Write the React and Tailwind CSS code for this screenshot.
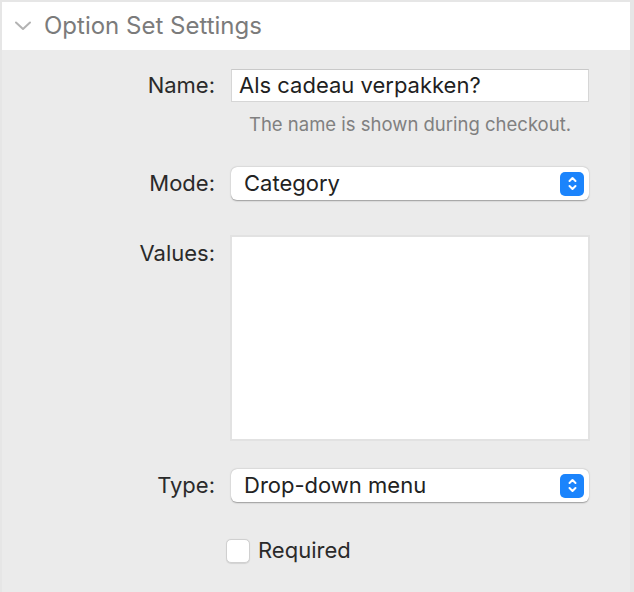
const font = { fontFamily: "Inter, 'Noto Sans', sans-serif" };

function Stepper() {
  return (
    <div className="w-[24px] h-[24px] rounded-[5px] bg-[#1b84fc] flex items-center justify-center">
      <svg width="11" height="17" viewBox="0 0 11 17" fill="none" stroke="white" strokeWidth="2" strokeLinecap="round" strokeLinejoin="round">
        <path d="M2.5 6 L5.5 3 L8.5 6" />
        <path d="M2.5 11 L5.5 14 L8.5 11" />
      </svg>
    </div>
  );
}

function Select({ value }) {
  return (
    <div className="w-[358px] h-[33px] bg-white rounded-[6px] shadow-[0_0.5px_1.5px_rgba(0,0,0,0.35)] flex items-center justify-between pl-[13px] pr-[5px]">
      <span className="text-[22px] leading-[33px] text-[#222]">{value}</span>
      <Stepper />
    </div>
  );
}

function Label({ children, className = "" }) {
  return <div className={`w-[213px] text-right text-[22px] leading-[33px] text-[#2a2a2a] ${className}`}>{children}</div>;
}

export default function App() {
  return (
    <div className="w-[634px] h-[592px] bg-[#e6e6e6] pt-[2px] pl-[2px] pr-[4px]" style={font}>
      <div className="h-full bg-[#ebebeb] flex flex-col">
        <div className="h-[48px] bg-white flex items-center">
          <svg className="ml-[13px]" width="16" height="10" viewBox="0 0 16 10" fill="none" stroke="#b3b3b3" strokeWidth="2" strokeLinecap="round" strokeLinejoin="round">
            <path d="M1 1.5 L8 8 L15 1.5" />
          </svg>
          <span className="ml-[13px] text-[24px] leading-[32px] text-[#7b7b7b]">Option Set Settings</span>
        </div>

        <div className="flex flex-col">
          <div className="flex items-center mt-[19px]">
            <Label>Name:</Label>
            <div className="ml-[16px] w-[358px] h-[33px] bg-white border border-[#d6d6d6] border-t-[#c9c9c9] flex items-center pl-[7px]">
              <span className="text-[22px] leading-[31px] text-[#1f1f1f]">Als cadeau verpakken?</span>
            </div>
          </div>
          <div className="ml-[229px] w-[358px] text-center text-[18.5px] leading-[22px] text-[#808080] mt-[11px]">
            The name is shown during checkout.
          </div>

          <div className="flex items-center mt-[32px]">
            <Label>Mode:</Label>
            <div className="ml-[16px]"><Select value="Category" /></div>
          </div>

          <div className="flex mt-[35px]">
            <Label className="pt-[2px]">Values:</Label>
            <div className="ml-[15px] w-[360px] h-[206px] bg-white border-2 border-[#e2e2e2]" />
          </div>

          <div className="flex items-center mt-[28px]">
            <Label>Type:</Label>
            <div className="ml-[16px]"><Select value="Drop-down menu" /></div>
          </div>

          <div className="flex items-center mt-[32px] ml-[224px]">
            <div className="w-[24px] h-[24px] bg-white rounded-[5px] border border-[#d0d0d0] shadow-[0_0.5px_1px_rgba(0,0,0,0.1)]" />
            <span className="ml-[8px] text-[22px] leading-[33px] text-[#2a2a2a]">Required</span>
          </div>
        </div>
      </div>
    </div>
  );
}
